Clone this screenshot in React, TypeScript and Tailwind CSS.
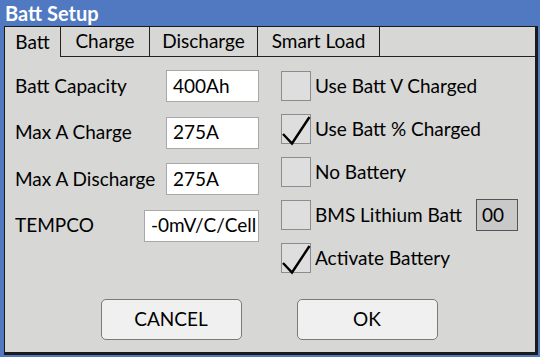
import React from 'react';

const font = { fontFamily: 'Lato, "Open Sans", sans-serif' };

function Field({ label, value, wide }: { label: string; value: string; wide?: boolean }) {
	return (
		<div className="flex items-center h-[32px]">
			<div className="flex-1 text-[19px] text-black">{label}</div>
			<div
				className={`h-full bg-white border border-[#a8a8a8] flex items-center pl-[6px] text-[19px] text-black ${
					wide ? 'w-[115px]' : 'w-[93px]'
				}`}
			>
				{value}
			</div>
		</div>
	);
}

function Check({ label, checked, extra }: { label: string; checked?: boolean; extra?: React.ReactNode }) {
	return (
		<div className="flex items-center h-[30px]">
			<div className="relative w-[30px] h-[30px] bg-[#dedede] border border-[#8c8c8c] shrink-0">
				{checked ? (
					<svg className="absolute left-0 top-0 overflow-visible" width="30" height="30" viewBox="0 0 30 30">
						<path d="M1 19 L10 28.5 L27.5 2" fill="none" stroke="#000" strokeWidth="2.4" strokeLinejoin="miter" />
					</svg>
				) : null}
			</div>
			<div className="ml-[4px] text-[19px] text-black">{label}</div>
			{extra}
		</div>
	);
}

function Tab({ label, w, active }: { label: string; w: string; active?: boolean }) {
	return (
		<div
			className={`${w} h-full flex items-center justify-center text-[19px] text-black border-r border-[#222] ${
				active ? '' : 'border-b'
			}`}
		>
			{label}
		</div>
	);
}

export default function App() {
	return (
		<div className="w-[540px] h-[357px] bg-[#5079c2] flex flex-col pl-[4px] pr-[2px] pb-[2px]" style={font}>
			<div className="h-[26px] pl-[1px] flex items-center text-white font-bold text-[20px] leading-none">
				Batt Setup
			</div>
			<div className="flex-1 bg-[#d7d7d5] border-l border-t border-[#1a1a1a] border-r-[3px] border-b-[3px] flex flex-col">
				<div className="h-[30px] flex">
					<Tab label="Batt" w="w-[56px]" active />
					<Tab label="Charge" w="w-[89px]" />
					<Tab label="Discharge" w="w-[108px]" />
					<Tab label="Smart Load" w="w-[122px]" />
					<div className="flex-1 border-b border-[#222]" />
				</div>
				<div className="flex-1 flex flex-col">
					<div className="flex">
						<div className="w-[244px] ml-[10px] pt-[13px] flex flex-col gap-[14.5px]">
							<Field label="Batt Capacity" value="400Ah" />
							<Field label="Max A Charge" value="275A" />
							<Field label="Max A Discharge" value="275A" />
							<Field label="TEMPCO" value="-0mV/C/Cell" wide />
						</div>
						<div className="ml-[22px] pt-[14px] flex flex-col gap-[13px] w-[237px]">
							<Check label="Use Batt V Charged" />
							<Check label="Use Batt % Charged" checked />
							<Check label="No Battery" />
							<Check
								label="BMS Lithium Batt"
								extra={
									<div className="ml-auto w-[42px] h-[32px] bg-[#c9c9c9] border border-[#555] flex items-center pl-[5px] text-[19px] text-black">
										00
									</div>
								}
							/>
							<Check label="Activate Battery" checked />
						</div>
					</div>
					<div className="flex justify-center gap-[55px] mt-[26px] pr-[2px]">
						<button className="w-[141px] h-[41px] rounded-[5px] bg-[#f0f0f0] border border-[#7a7a7a] text-[19px] text-black">
							CANCEL
						</button>
						<button className="w-[141px] h-[41px] rounded-[5px] bg-[#f0f0f0] border border-[#7a7a7a] text-[19px] text-black">
							OK
						</button>
					</div>
				</div>
			</div>
		</div>
	);
}
